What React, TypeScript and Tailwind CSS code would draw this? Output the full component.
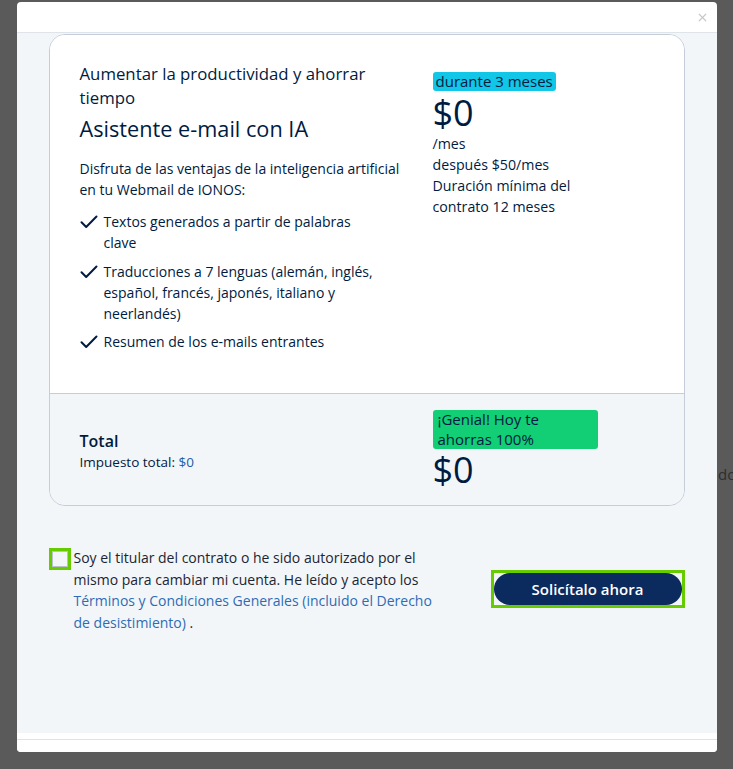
import { X } from 'lucide-react';

function CheckIcon() {
  return (
    <svg width="18" height="14" viewBox="0 0 18 14" fill="none" className="mt-[4px] shrink-0">
      <path d="M1.5 7.2 L6.2 12 L16.5 1.5" stroke="#001b41" strokeWidth="2" strokeLinecap="round" strokeLinejoin="round" />
    </svg>
  );
}

const features = [
  'Textos generados a partir de palabras clave',
  'Traducciones a 7 lenguas (alemán, inglés, español, francés, japonés, italiano y neerlandés)',
  'Resumen de los e-mails entrantes',
];

export default function App() {
  return (
    <div
      className="relative h-[769px] w-[733px] overflow-hidden bg-[#5a5a5a] pt-[2px] text-[#001b41]"
      style={{ fontFamily: '"Open Sans", "Noto Sans", sans-serif' }}
    >
      {/* page text behind the overlay */}
      <span className="absolute left-[718px] top-[463px] text-[15px] text-[#2e2e2e]">do</span>

      <div className="relative mx-auto flex h-[750px] w-[700px] flex-col overflow-hidden rounded-[4px] bg-white">
        {/* Header */}
        <div className="flex h-[31px] shrink-0 items-center justify-end border-b border-[#dfe3ea] pr-[8px]">
          <X size={13} strokeWidth={2.2} className="text-[#c8c8c8]" />
        </div>

        {/* Body */}
        <div className="flex flex-1 flex-col bg-[#f3f6f9] px-[32px]">
          {/* Card */}
          <div className="mt-[1px] overflow-hidden rounded-[16px] border border-[#c5cdd9]">
            <div className="flex bg-white pb-[41px] pl-[30px] pr-[24px] pt-[27px]">
              <div className="w-[323px]">
                <h3 className="text-[16.8px] leading-[24px]">Aumentar la productividad y ahorrar tiempo</h3>
                <h2 className="mt-[6px] text-[21.7px] font-medium leading-[26px]">Asistente e-mail con IA</h2>
                <p className="mt-[16px] w-[330px] text-[14px] leading-[21px]">
                  Disfruta de las ventajas de la inteligencia artificial en tu Webmail de IONOS:
                </p>
                <ul className="mt-[11px] flex flex-col gap-[7.5px]">
                  {features.map((f) => (
                    <li key={f} className="flex gap-[6px]">
                      <CheckIcon />
                      <span className="w-[275px] text-[14px] leading-[21px]">{f}</span>
                    </li>
                  ))}
                </ul>
              </div>
              <div className="ml-[30px] w-[170px] pt-[7px]">
                <span className="inline-block rounded-[3px] bg-[#11c6e6] px-[3px] text-[15px] leading-[19px]">
                  durante 3 meses
                </span>
                <div className="text-[36px] leading-[40px]">$0</div>
                <div className="text-[14.2px] leading-[21px]">
                  <div>/mes</div>
                  <div>después $50/mes</div>
                  <div>Duración mínima del contrato 12 meses</div>
                </div>
              </div>
            </div>
            <div className="flex border-t border-[#c5cdd9] bg-[#f3f6f9] pb-[14px] pl-[30px] pr-[24px] pt-[16px]">
              <div className="w-[323px] pt-[20px]">
                <div className="text-[16px] font-semibold leading-[22px]">Total</div>
                <div className="text-[13.5px] leading-[20px]">
                  Impuesto total: <span className="text-[#1b5ea8]">$0</span>
                </div>
              </div>
              <div className="ml-[30px]">
                <div className="w-[165px] rounded-[3px] bg-[#12ce74] pl-[5px] pr-[40px] text-[15px] leading-[19.5px]">
                  ¡Genial! Hoy te ahorras 100%
                </div>
                <div className="text-[36px] leading-[42px]">$0</div>
              </div>
            </div>
          </div>

          {/* Consent + CTA */}
          <div className="mt-[41px] flex items-start">
            <div className="mt-[1px] h-[22px] w-[22px] shrink-0 border-[3px] border-[#66cc00] bg-[#f3f6f9]">
              <div className="h-full w-full border border-[#b9c1cc]" />
            </div>
            <p className="ml-[3px] w-[370px] text-[14px] leading-[21.5px] text-[#1b2533]">
              Soy el titular del contrato o he sido autorizado por el mismo para cambiar mi cuenta. He leído y acepto los{' '}
              <span className="text-[#2d6cb5]">Términos y Condiciones Generales (incluido el Derecho de desistimiento)</span> .
            </p>
            <div className="ml-auto mt-[23px] border-[3px] border-[#66cc00]">
              <button className="h-[32px] w-[188px] rounded-full bg-[#0b2a5e] text-[15px] font-semibold text-white">
                Solicítalo ahora
              </button>
            </div>
          </div>
          <div className="flex-1" />
        </div>

        {/* Footer */}
        <div className="h-[6px] shrink-0 bg-white" />
        <div className="h-[13px] shrink-0 border-t border-[#e2e2e2] bg-white" />
      </div>
    </div>
  );
}
